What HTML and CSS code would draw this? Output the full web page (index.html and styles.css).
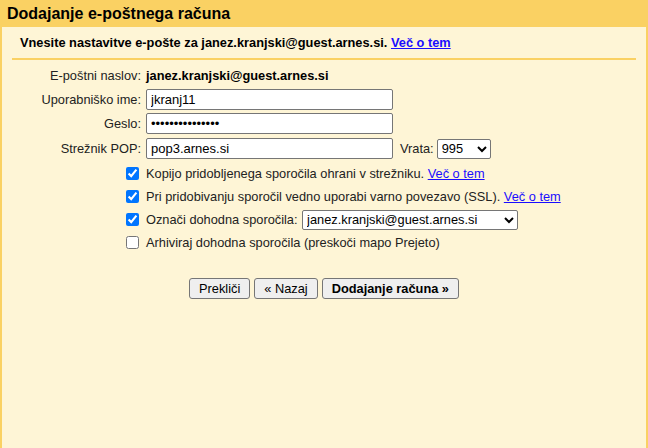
FILE: index.html
```html
<!DOCTYPE html>
<html lang="sl">
<head>
<meta charset="utf-8">
<title>Dodajanje e-poštnega računa</title>
<link rel="stylesheet" href="styles.css">
</head>
<body>
<div class="page">
  <div class="header">Dodajanje e-poštnega računa</div>
  <div class="content">
    <p class="intro">Vnesite nastavitve e-pošte za janez.kranjski@guest.arnes.si. <a href="#">Več o tem</a></p>
    <div class="rule"></div>
    <div class="form">
      <div class="label">E-poštni naslov:</div>
      <div class="value"><b>janez.kranjski@guest.arnes.si</b></div>

      <div class="label">Uporabniško ime:</div>
      <div class="value"><input class="text" type="text" value="jkranj11"></div>

      <div class="label">Geslo:</div>
      <div class="value"><input class="text" type="password" value="abcdefghijklmno"></div>

      <div class="label">Strežnik POP:</div>
      <div class="value"><input class="text" type="text" value="pop3.arnes.si"><span class="port">Vrata:</span><select class="sel port-sel"><option>995</option></select></div>

      <div class="label"><input type="checkbox" checked></div>
      <div class="value">Kopijo pridobljenega sporočila ohrani v strežniku. <a href="#">Več o tem</a></div>

      <div class="label"><input type="checkbox" checked></div>
      <div class="value">Pri pridobivanju sporočil vedno uporabi varno povezavo (SSL). <a href="#">Več o tem</a></div>

      <div class="label"><input type="checkbox" checked></div>
      <div class="value">Označi dohodna sporočila: <select class="sel mail-sel"><option>janez.kranjski@guest.arnes.si</option></select></div>

      <div class="label"><input type="checkbox"></div>
      <div class="value">Arhiviraj dohodna sporočila (preskoči mapo Prejeto)</div>
    </div>
    <div class="buttons">
      <button class="btn">Prekliči</button>
      <button class="btn">« Nazaj</button>
      <button class="btn primary">Dodajanje računa »</button>
    </div>
  </div>
</div>
</body>
</html>
```
FILE: styles.css
```css
html, body {
  margin: 0;
  padding: 0;
}
body {
  font-family: "Liberation Sans", Arial, sans-serif;
  font-size: 12.8px;
  color: #222;
}
.page {
  height: 448px;
  background: #fef5d6;
  border-left: 2px solid #fad163;
  border-right: 2px solid #fad163;
  box-sizing: border-box;
}
.header {
  background: #fad163;
  height: 27px;
  line-height: 27px;
  padding-left: 5px;
  font-size: 16px;
  font-weight: bold;
  color: #000;
}
.content {
  padding: 0 10px;
}
.intro {
  margin: 0;
  padding: 8px 0 0 8px;
  font-weight: bold;
  line-height: 16px;
  color: #000;
  height: 23px;
}
a {
  color: #1a0dff;
  text-decoration: underline;
}
.rule {
  height: 2px;
  background: #fad163;
}
.form {
  display: grid;
  grid-template-columns: 129px auto;
  grid-template-rows: 23px 24px 25px 25px 24px 23px 23px 22px;
  column-gap: 5px;
  margin-top: 4px;
  align-items: center;
}
.label {
  text-align: right;
  display: flex;
  justify-content: flex-end;
  align-items: center;
}
.value {
  display: flex;
  align-items: center;
  white-space: pre;
}
.value b {
  color: #000;
}
.label input[type="checkbox"] {
  margin: 0 2px 0 0;
  width: 13px;
  height: 13px;
}
.text {
  box-sizing: border-box;
  width: 247px;
  height: 21px;
  font-family: "Liberation Sans", Arial, sans-serif;
  font-size: 13px;
  padding: 1px 4px;
  border: 1px solid #767676;
  border-radius: 2px;
  background: #fff;
  color: #000;
}
.port {
  margin-left: 7px;
  margin-right: 3px;
}
.sel {
  box-sizing: border-box;
  height: 20px;
  font-family: "Liberation Sans", Arial, sans-serif;
  font-size: 12.8px;
  border: 1px solid #767676;
  border-radius: 2px;
  background: #fff;
  color: #000;
}
.port-sel {
  width: 54px;
}
.mail-sel {
  width: 216px;
  margin-left: 1px;
}
.buttons {
  display: flex;
  justify-content: center;
  gap: 4px;
  margin-top: 25px;
}
.btn {
  font-family: "Liberation Sans", Arial, sans-serif;
  font-size: 12.8px;
  height: 21px;
  padding: 0 9px;
  border: 1px solid #767676;
  border-radius: 3px;
  background: #efefef;
  color: #000;
}
.btn.primary {
  font-weight: bold;
  padding: 0 9px;
}
```
